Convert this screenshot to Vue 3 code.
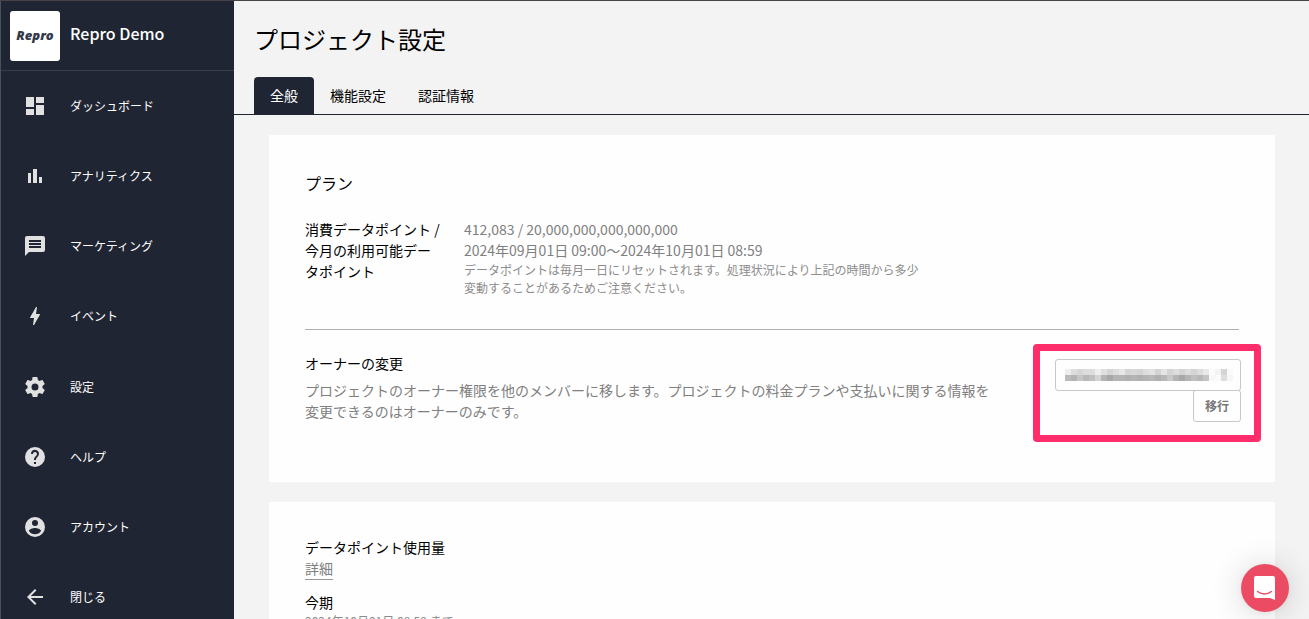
<script setup>
const menu = [
  { label: 'ダッシュボード', path: 'M3 13h8V3H3v10zm0 8h8v-6H3v6zm10 0h8V11h-8v10zm0-18v6h8V3h-8z' },
  { label: 'アナリティクス', path: 'M5 9h3v10H5zM10 5h4v14h-4zM16 13h3v6h-3z' },
  { label: 'マーケティング', path: 'M20 2H4a2 2 0 0 0-2 2v18l4-4h14a2 2 0 0 0 2-2V4a2 2 0 0 0-2-2zM6 6h12v2H6zm0 3h12v2H6zm0 3h12v2H6z' },
  { label: 'イベント', path: 'M11 21h-1l1-7H7.500c-.880 0-.330-.750-.310-.780C8.480 10.940 10.420 7.540 13.010 3h1l-1 7h3.510c.4 0 .620.190.4.660C12.970 17.550 11 21 11 21z' },
]
const subMenu = [
  { label: '設定', path: 'M19.430 12.980c.040-.320.070-.640.070-.980s-.030-.660-.070-.980l2.110-1.650c.190-.150.240-.420.120-.640l-2-3.460c-.120-.220-.390-.300-.610-.220l-2.490 1c-.520-.400-1.080-.730-1.690-.980l-.380-2.650A.490.490 0 0 0 14 2h-4c-.250 0-.460.180-.490.420l-.380 2.650c-.610.250-1.170.590-1.690.980l-2.490-1c-.230-.090-.490 0-.610.220l-2 3.460c-.130.220-.070.490.120.640l2.110 1.650c-.040.320-.070.650-.070.980s.030.660.070.980l-2.110 1.650c-.190.150-.240.420-.120.640l2 3.460c.120.220.390.300.610.220l2.490-1c.520.400 1.080.730 1.690.980l.380 2.650c.030.240.240.420.490.420h4c.250 0 .460-.180.490-.420l.380-2.650c.610-.250 1.170-.590 1.690-.980l2.490 1c.230.090.490 0 .610-.220l2-3.460c.120-.220.070-.490-.120-.640l-2.110-1.650zM12 15.500a3.500 3.500 0 1 1 0-7 3.500 3.500 0 0 1 0 7z' },
  { label: 'ヘルプ', path: 'M12 2a10 10 0 1 0 0 20 10 10 0 0 0 0-20zm1 17h-2v-2h2v2zm2.070-7.750l-.9.920C13.450 12.900 13 13.500 13 15h-2v-.5c0-1.100.450-2.100 1.170-2.830l1.240-1.260A2 2 0 1 0 10 9H8a4 4 0 1 1 7.070 2.250z' },
  { label: 'アカウント', path: 'M12 2a10 10 0 1 0 0 20 10 10 0 0 0 0-20zm0 3a3 3 0 1 1 0 6 3 3 0 0 1 0-6zm0 14.200a7.200 7.200 0 0 1-6-3.220c.030-1.990 4-3.080 6-3.080s5.970 1.090 6 3.080a7.200 7.200 0 0 1-6 3.220z' },
  { label: '閉じる', path: 'M20 11H7.830l5.590-5.590L12 4l-8 8 8 8 1.410-1.410L7.830 13H20v-2z' },
]
const tabs = ['全般', '機能設定', '認証情報']
const mosaic = [
  ['#eee', '#ddd', '#d6d6d6', '#ddd', '#ddd', '#eee', '#e0e0e0', '#d4d4d4', '#ddd', '#e6e6e6', '#d4d4d4', '#d8d8d8', '#d4d4d4', '#ddd', '#e2e2e2', '#d4d4d4', '#e4e4e4', '#d4d4d4', '#ddd', '#d4d4d4', '#ddd', '#d4d4d4', '#ddd', '#e8e8e8', '#fbfbfb', '#f4f4f4', '#d4d4d4', '#fafafa'],
  ['#bbb', '#b4b4b4', '#c6c6c6', '#b8b8b8', '#c0c0c0', '#d4d4d4', '#b4b4b4', '#a8a8a8', '#b4b4b4', '#b4b4b4', '#b0b0b0', '#b4b4b4', '#b0b0b0', '#b4b4b4', '#b8b8b8', '#b0b0b0', '#b8b8b8', '#c8c8c8', '#b4b4b4', '#a8a8a8', '#b4b4b4', '#c0c0c0', '#b8b8b8', '#c4c4c4', '#f8f8f8', '#fafafa', '#dedede', '#f6f6f6'],
]
</script>

<template>
  <div class="page">
    <aside class="sidebar">
      <div class="brand">
        <div class="logo">Repro</div>
        <span>Repro Demo</span>
      </div>
      <nav class="menu">
        <div v-for="(group, g) in [menu, subMenu]" :key="g">
          <a v-for="item in group" :key="item.label" href="#" class="menu-item">
            <svg class="menu-icon" viewBox="0 0 24 24" aria-hidden="true"><path :d="item.path" fill-rule="evenodd" /></svg>
            <span>{{ item.label }}</span>
          </a>
        </div>
      </nav>
    </aside>

    <main class="main">
      <h1>プロジェクト設定</h1>
      <nav class="tabs">
        <a v-for="(tab, i) in tabs" :key="tab" href="#" class="tab" :class="{ active: i === 0 }">{{ tab }}</a>
      </nav>
      <div class="content">
        <section class="card">
          <h2>プラン</h2>
          <dl class="plan">
            <dt>消費データポイント / 今月の利用可能データポイント</dt>
            <dd>
              <p>412,083 / 20,000,000,000,000,000</p>
              <p>2024年09月01日 09:00〜2024年10月01日 08:59</p>
              <p class="note">データポイントは毎月一日にリセットされます。処理状況により上記の時間から多少変動することがあるためご注意ください。</p>
            </dd>
          </dl>
          <hr>
          <div class="owner">
            <div class="owner-text">
              <h3><label for="owner">オーナーの変更</label></h3>
              <p>プロジェクトのオーナー権限を他のメンバーに移します。プロジェクトの料金プランや支払いに関する情報を変更できるのはオーナーのみです。</p>
            </div>
            <form class="transfer" @submit.prevent>
              <div class="select-wrap">
                <select id="owner"><option></option></select>
                <svg class="mosaic" viewBox="0 0 168 12" aria-hidden="true" shape-rendering="crispEdges">
                  <template v-for="(row, y) in mosaic" :key="y">
                    <rect v-for="(c, x) in row" :key="x" :x="x * 6" :y="y * 6" width="6" height="6" :fill="c" />
                  </template>
                </svg>
              </div>
              <button type="submit" class="submit">移行</button>
              <div class="highlight"></div>
            </form>
          </div>
        </section>

        <section class="card">
          <h3>データポイント使用量</h3>
          <a href="#" class="detail">詳細</a>
          <h3 class="term">今期</h3>
          <p class="note">2024年10月01日 08:59 まで</p>
        </section>
      </div>
    </main>

    <button class="chat" type="button" aria-label="チャット">
      <svg viewBox="0 0 24 26" aria-hidden="true">
        <path d="M3 1h17a2 2 0 0 1 2 2v22l-5-2H3a2 2 0 0 1-2-2V3a2 2 0 0 1 2-2z" fill="#fff" />
        <path d="M4.500 16.500q7 5 14 0" fill="none" stroke="#ec4c63" stroke-width="1.500" stroke-linecap="round" />
      </svg>
    </button>
  </div>
</template>

<style>
body {
  margin: 0;
}
</style>

<style scoped>
* {
  box-sizing: border-box;
}
.page {
  display: flex;
  height: 100vh;
  overflow: hidden;
  border-top: 1px solid #454345;
  background: #f3f3f3;
  color: #000;
  font: 14px/21px "Noto Sans CJK JP", sans-serif;
}
h1, h2, h3, p, dl, dd {
  margin: 0;
  font-weight: 400;
}
a {
  text-decoration: none;
}
.sidebar {
  flex: 0 0 234px;
  border-left: 1px solid #4b505b;
  background: #202533;
  color: #fff;
}
.brand {
  display: flex;
  gap: 10px;
  height: 70px;
  padding: 10px 9px;
  border-bottom: 1px solid #383d4a;
  font-size: 16px;
  font-weight: 500;
  line-height: 44px;
}
.logo {
  width: 50px;
  height: 50px;
  border-radius: 3px;
  background: #fff;
  color: #343a4a;
  font: italic 800 13px/48px "Open Sans", sans-serif;
  text-align: center;
}
.menu {
  display: grid;
  gap: 1px;
}
.menu-item {
  display: flex;
  align-items: center;
  gap: 23px;
  height: 70px;
  padding-left: 22px;
  color: #fff;
  font-size: 12px;
}
.menu-item span {
  padding-bottom: 1px;
}
.menu-icon {
  width: 24px;
  height: 24px;
  fill: #e1e1e1;
}
.main {
  flex: 1;
  min-width: 0;
}
h1 {
  padding: 20px;
  font-size: 24px;
  line-height: 36px;
}
.tabs {
  display: flex;
  padding-left: 20px;
  border-bottom: 1px solid #202533;
}
.tab {
  padding: 8px 16px;
  border-radius: 4px 4px 0 0;
  color: #000;
}
.tab.active {
  background: #202533;
  color: #fff;
}
.content {
  display: grid;
  gap: 20px;
  padding: 20px 34px 20px 35px;
}
.card {
  padding: 35px 36px 60px;
  background: #fefefe;
}
h2 {
  font-size: 16px;
  line-height: 26px;
}
h3 {
  font-size: 14px;
}
.plan {
  display: grid;
  grid-template-columns: 138px minmax(0, 466px);
  gap: 21px;
  margin-top: 23px;
}
dd {
  color: #808080;
}
.note {
  color: #8c8c8c;
  font-size: 12px;
  line-height: 18px;
}
hr {
  height: 1px;
  margin: 32px 0 23px;
  border: 0;
  background: #b0b0b0;
}
.owner {
  display: flex;
  justify-content: space-between;
  gap: 24px;
}
.owner-text {
  flex: 0 1 698px;
}
.owner-text p {
  margin-top: 6px;
  color: #808080;
}
.transfer {
  position: relative;
  display: flex;
  flex-direction: column;
  align-items: flex-end;
  align-self: flex-start;
  width: 186px;
  margin: 6px -2px 0 0;
}
.select-wrap {
  position: relative;
  width: 100%;
}
select, .submit {
  display: block;
  height: 32px;
  border: 1px solid #c8c8cb;
  border-radius: 3px;
  background: #fefefe;
}
select {
  width: 100%;
  appearance: none;
}
.mosaic {
  position: absolute;
  top: 10px;
  left: 10px;
  width: 168px;
  height: 12px;
}
.submit {
  margin-top: -1px;
  padding: 0 11px;
  color: #777;
  font: 700 12px/30px "Noto Sans CJK JP", sans-serif;
}
.highlight {
  position: absolute;
  inset: -15px -20px -20px -22px;
  border: 7px solid #ff2d6c;
  border-radius: 4px;
  pointer-events: none;
}
.detail {
  display: inline-block;
  border-bottom: 1px solid #999;
  color: #808080;
}
.term {
  margin-top: 12px;
  line-height: 20px;
}
.chat {
  position: fixed;
  right: 20px;
  bottom: 7px;
  display: grid;
  place-items: center;
  width: 48px;
  height: 48px;
  padding: 0;
  border: 0;
  border-radius: 50%;
  background: #ec4c63;
  box-shadow: 0 1px 6px rgba(0, 0, 0, 0.06), 0 2px 32px rgba(0, 0, 0, 0.16);
}
.chat svg {
  width: 24px;
  height: 26px;
}
</style>
